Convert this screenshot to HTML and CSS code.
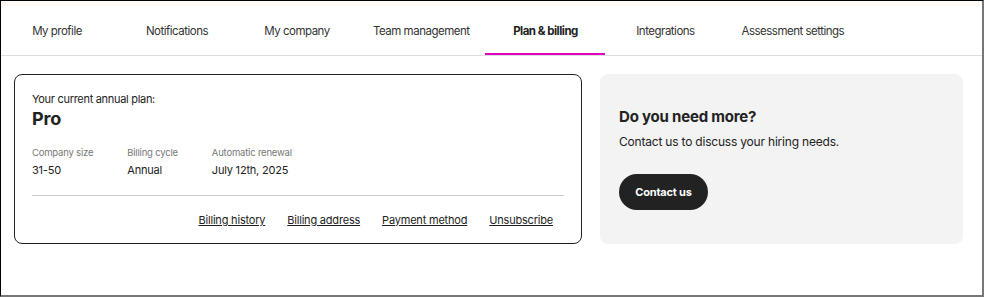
FILE: index.html
```html
<!DOCTYPE html>
<html>
<head>
  <meta charset="utf-8">
  <meta name="viewport" content="width=device-width">
  <title>Plan &amp; billing</title>
  <link rel="stylesheet" href="styles.css">
</head>
<body>
  <div class="strip"></div>
  <div class="tabs">
    <a href="javascript:;" class="tab">My profile</a>
    <a href="javascript:;" class="tab">Notifications</a>
    <a href="javascript:;" class="tab">My company</a>
    <a href="javascript:;" class="tab">Team management</a>
    <a href="javascript:;" class="tab on">Plan &amp; billing</a>
    <a href="javascript:;" class="tab">Integrations</a>
    <a href="javascript:;" class="tab">Assessment settings</a>
  </div>
  <div class="content">
    <div class="plan">
      <div class="plan-label">Your current annual plan:</div>
      <div class="plan-name">Pro</div>
      <div class="meta">
        <div class="meta-item">
          <div class="meta-key">Company size</div>
          <div class="meta-val">31-50</div>
        </div>
        <div class="meta-item">
          <div class="meta-key">Billing cycle</div>
          <div class="meta-val">Annual</div>
        </div>
        <div class="meta-item">
          <div class="meta-key">Automatic renewal</div>
          <div class="meta-val">July 12th, 2025</div>
        </div>
      </div>
      <div class="links">
        <a href="javascript:;">Billing history</a>
        <a href="javascript:;">Billing address</a>
        <a href="javascript:;">Payment method</a>
        <a href="javascript:;">Unsubscribe</a>
      </div>
    </div>
    <div class="more">
      <h2>Do you need more?</h2>
      <p>Contact us to discuss your hiring needs.</p>
      <a href="javascript:;" class="btn">Contact us</a>
    </div>
  </div>
</body>
</html>
```
FILE: styles.css
```css
html, body{
  margin: 0;
  padding: 0;
}
body{
  box-sizing: border-box;
  height: 297px;
  border-top: 1px solid #000;
  border-left: 1px solid #000;
  border-right: 2px solid #777;
  border-bottom: 2px solid #777;
  font-family: Inter, "Liberation Sans", sans-serif;
  color: #222;
  background: #fff;
  letter-spacing: -0.2px;
}
a{
  color: #222;
}
.strip{
  height: 5px;
  background: #fffaf5;
}
.tabs{
  display: flex;
  height: 49px;
  padding-left: 0;
  border-bottom: 1px solid #ddd;
}
.tab{
  box-sizing: border-box;
  min-width: 120px;
  padding: 2px 16px 0;
  display: flex;
  align-items: center;
  justify-content: center;
  border-bottom: 2px solid transparent;
  font-size: 11.5px;
  letter-spacing: -0.5px;
  text-decoration: none;
  color: #333;
}
.tab:first-child{
  margin-left: -4px;
}
.tab.on{
  font-weight: 700;
  color: #222;
  border-bottom-color: #e000c0;
}
.content{
  display: grid;
  grid-template-columns: 568px 363px;
  gap: 18px;
  padding: 18px 18px 0 13px;
}
.plan{
  box-sizing: border-box;
  height: 170px;
  border: 1px solid #222;
  border-radius: 8px;
  padding: 16px 17px 0;
}
.plan-label{
  font-size: 11px;
  line-height: 16px;
  letter-spacing: -0.3px;
}
.plan-name{
  font-size: 18px;
  font-weight: 700;
  line-height: 24px;
}
.meta{
  display: flex;
  gap: 34px;
  margin-top: 15px;
  padding-bottom: 17px;
  border-bottom: 1px solid #ccc;
}
.meta-key{
  font-size: 9.5px;
  color: #777;
  line-height: 14px;
}
.meta-val{
  font-size: 11px;
  line-height: 16px;
  margin-top: 2px;
}
.links{
  display: flex;
  justify-content: flex-end;
  margin-top: 16px;
}
.links a{
  font-size: 11px;
  padding: 0 11px;
  line-height: 16px;
}
.more{
  box-sizing: border-box;
  height: 170px;
  background: #f3f3f3;
  border-radius: 8px;
  padding: 33px 19px 0;
}
.more h2{
  margin: 0;
  font-size: 15px;
  line-height: 20px;
  font-weight: 700;
}
.more p{
  margin: 6px 0 0;
  font-size: 12px;
  line-height: 18px;
}
.btn{
  display: inline-flex;
  align-items: center;
  justify-content: center;
  width: 89px;
  height: 36px;
  margin-top: 23px;
  border-radius: 18px;
  background: #222;
  color: #fff;
  font-size: 11px;
  font-weight: 700;
  text-decoration: none;
}
```
